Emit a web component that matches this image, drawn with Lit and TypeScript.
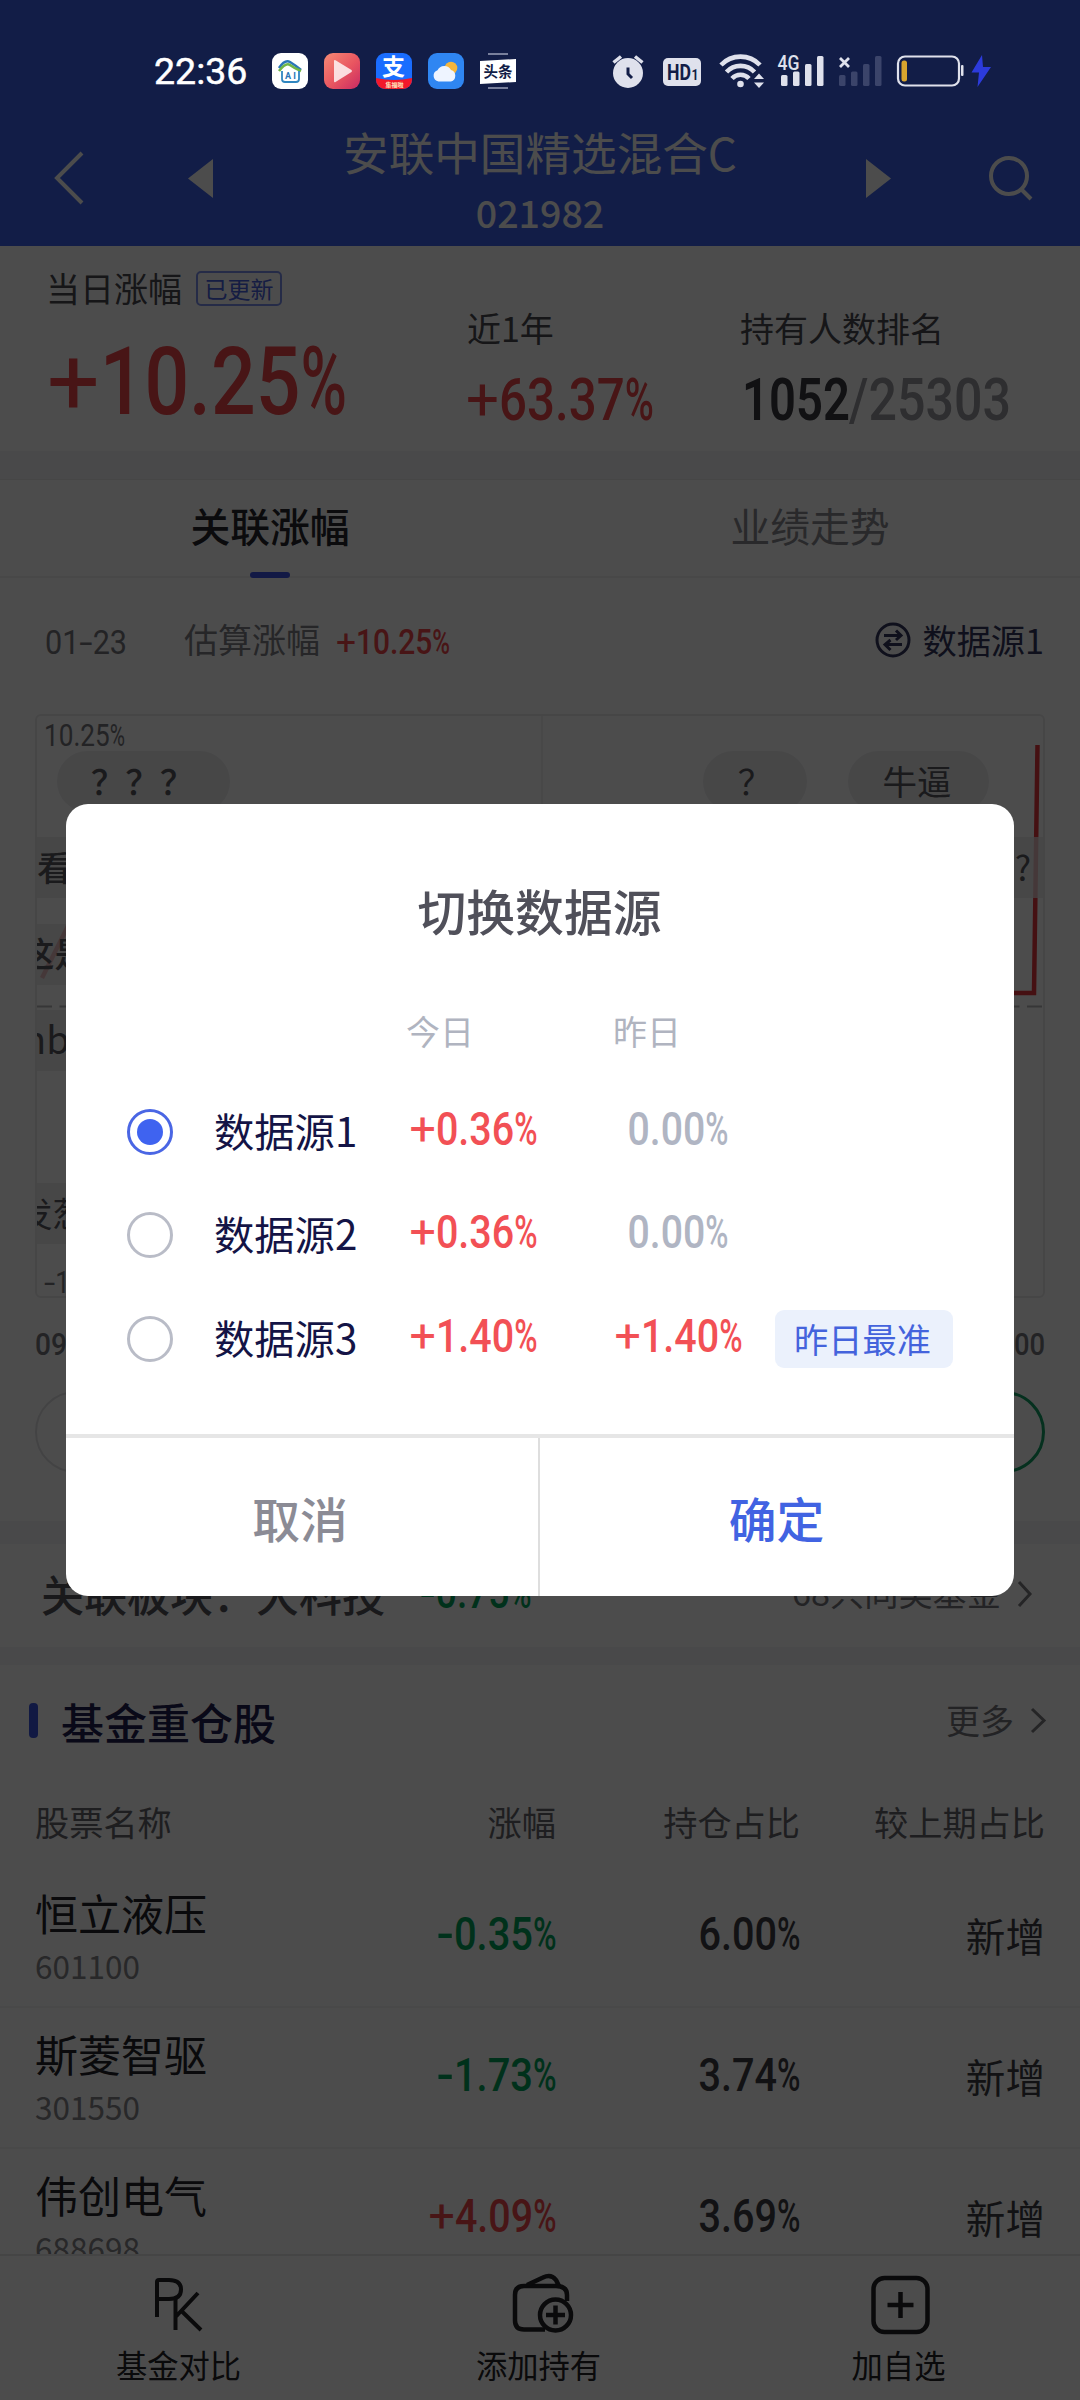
import { LitElement, html, svg, css } from "lit";
import { customElement, state } from "lit/decorators.js";

const unit = (c: string) =>
  c === "." || c === ":" ? 11 : c === "+" ? 26 : c === "-" ? 17 : c === "/" ? 15 : c === "%" ? 23 : 22;

const figure = (text: string, width: number, height: number, cls = "", weight = 500) => {
  const parts = text.match(/[0-9.]+|[^0-9.]/g) ?? [];
  const lengths = parts.map((p) => [...p].reduce((s, c) => s + unit(c), 0));
  const total = lengths.reduce((a, b) => a + b, 0);
  const pad = height * 0.045;
  const k = (width + pad * 2) / total;
  const size = height / 0.711;
  let x = -pad;
  return html`<svg class="fig ${cls}" width=${width} height=${height} font-size=${size} font-weight=${weight}>
    <text y=${height}>${parts.map((p, i) => {
      const start = x;
      x += lengths[i] * k;
      return svg`<tspan x=${start} textLength=${lengths[i] * k} lengthAdjust="spacingAndGlyphs" font-weight=${p === "+" ? 400 : weight}>${p}</tspan>`;
    })}</text>
  </svg>`;
};

const sources = [
  { name: "数据源1", today: "+0.36%", last: "0.00%", best: false },
  { name: "数据源2", today: "+0.36%", last: "0.00%", best: false },
  { name: "数据源3", today: "+1.40%", last: "+1.40%", best: true },
];

const stocks = [
  { name: "恒立液压", code: "601100", change: "-0.35%", w: 117, share: "6.00%", diff: "新增" },
  { name: "斯菱智驱", code: "301550", change: "-1.73%", w: 117, share: "3.74%", diff: "新增" },
  { name: "伟创电气", code: "688698", change: "+4.09%", w: 125, share: "3.69%", diff: "新增" },
];

const chevron = (w: number, h: number) => html`<svg width=${w} height=${h} fill="none" stroke="#7c7c80" stroke-width="3">
  <path d="M2 2 L${w - 3} ${h / 2} L2 ${h - 2}" /></svg>`;

@customElement("app-root")
export class AppRoot extends LitElement {
  @state() private selected = 0;

  static styles = css`
    :host {
      display: block;
      font-family: "Noto Sans CJK SC", "Noto Sans", sans-serif;
      color: #333;
    }
    * { box-sizing: border-box; }
    svg { display: block; flex: none; overflow: visible; }
    .page {
      position: relative;
      width: 1080px;
      height: 2400px;
      overflow: hidden;
      background: #fff;
      display: flex;
      flex-direction: column;
      white-space: nowrap;
    }
    .fig { font-family: Roboto, sans-serif; fill: currentColor; }
    .red { color: #f0484c; }
    .green { color: #00a35a; }
    .gray { color: #8f8f96; }
    .gap { background: #f6f6f8; flex: none; }
    .gap.a { height: 28px; }
    .gap.b { height: 23px; }
    .gap.c { height: 18px; }

    .header {
      flex: none;
      height: 246px;
      padding: 120px 48px 0 54px;
      background: #3c61ed;
      color: #fff;
      display: grid;
      grid-template-columns: 134px 706px 1fr;
      align-items: start;
    }
    .header .back { margin-top: 31px; }
    .title { display: flex; align-items: flex-start; }
    .title .names { width: 652px; text-align: center; }
    .title .tri { margin-top: 39px; }
    .fund { font-size: 45.6px; line-height: 61px; padding-top: 1px; }
    .code { font-size: 37.6px; line-height: 54px; font-weight: 500; padding-top: 3px; }
    .header .search { margin: 36px 0 0 90px; }

    .summary { flex: none; height: 205px; padding: 20px 0 0 48px; display: grid; grid-template-columns: 419px 273px 1fr; }
    .label { font-size: 34px; line-height: 44px; color: #4a4a50; }
    .day { display: flex; align-items: center; gap: 14px; height: 44px; margin-left: -2px; }
    .tag {
      width: 86px; height: 35px; border: 2px solid #7d92ee; border-radius: 5px;
      font-size: 23px; line-height: 30px; text-align: center; color: #4761e0;
    }
    .big { margin-top: 37px; margin-left: 2px; }
    .metric { padding-top: 40px; }
    .metric .fig { margin: 28px 0 0 1px; }
    .metric .rank { display: flex; gap: 2px; color: #3a3a42; padding-left: 3px; }
    .rank .gray { color: #9a9aa0; }

    .tabs { flex: none; height: 99px; border-top: 1px solid #ececec; border-bottom: 2px solid #f0f0f0; display: grid; grid-template-columns: 1fr 1fr; text-align: center; }
    .tab { font-size: 39.8px; line-height: 60px; padding-top: 15px; color: #8a8a90; display: flex; flex-direction: column; align-items: center; }
    .tab.on { color: #26262e; font-weight: 500; }
    .mark { width: 40px; height: 6px; border-radius: 3px; background: #3c55e8; margin-top: 17px; }

    .estimate { flex: none; height: 136px; padding: 39px 36px 0 46px; display: flex; align-items: flex-start; color: #77777c; }
    .estimate .label { color: #808086; margin-left: 58px; width: 153px; }
    .estimate .fig { margin-top: 14px; }
    .estimate .red { margin-top: 12px; }
    .switch { margin-left: auto; display: flex; gap: 11px; color: #34365e; }
    .switch svg { margin-top: 5px; }
    .switch span { font-size: 34.2px; line-height: 44px; }

    .chart { flex: none; position: relative; width: 1010px; height: 584px; margin-left: 35px; overflow: hidden; border: 2px solid #eaeaec; border-radius: 6px; }
    .chart > * { position: absolute; }
    .mid { left: 504px; top: 0; height: 580px; border-left: 2px solid #f0f0f2; }
    .line { left: 0; top: 0; }
    .pill { height: 61px; border-radius: 31px; background: rgba(236, 236, 238, 0.92); font-size: 34.5px; line-height: 58px; color: #58585e; text-align: center; overflow: hidden; font-weight: 500; }
    .band { border-radius: 0; background: rgba(232, 232, 234, 0.75); }
    .p1 { left: 20px; top: 35px; width: 173px; padding-right: 2px; }
    .p2 { left: 666px; top: 35px; width: 104px; font-weight: 400; }
    .p3 { left: 811px; top: 35px; width: 141px; padding-right: 3px; font-weight: 400; }
    .p4 { left: -2px; top: 121px; width: 400px; text-align: left; padding-left: 2px; }
    .p5 { left: 700px; top: 121px; width: 308px; text-align: right; padding-right: 14px; font-weight: 400; }
    .p6 { left: -20px; top: 208px; width: 400px; text-align: left; padding-left: 3px; line-height: 56px; }
    .p7 { left: -20px; top: 294px; width: 400px; text-align: left; padding-left: 6px; font-size: 38px; line-height: 55px; font-weight: 400; }
    .p8 { left: -20px; top: 467px; width: 400px; text-align: left; padding-left: 1px; font-weight: 400; }
    .high { left: 8px; top: 8px; color: #77777c; }
    .low { left: 8px; top: 555px; color: #77777c; }

    .hours { flex: none; height: 93px; padding: 35px 36px 0; display: flex; justify-content: space-between; color: #77777c; }
    .votes { flex: none; height: 130px; padding: 0 35px; display: grid; grid-template-columns: 1fr 1fr; gap: 20px; }
    .vote { height: 82px; border: 2px solid #e2e2e4; border-radius: 41px; }
    .vote.up { border: 3px solid #11a067; }

    .board { flex: none; height: 103px; padding: 18px 47px 0 41px; display: flex; align-items: flex-start; }
    .board .name { font-size: 43px; line-height: 62px; font-weight: 500; color: #55555a; width: 380px; }
    .board .fig { margin-top: 15px; }
    .board .peers { margin-left: auto; margin-right: 16px; font-size: 34.2px; line-height: 50px; padding-top: 4px; color: #77777c; }
    .board svg:last-child { margin-top: 18px; }

    .holdings { flex: none; height: 589px; overflow: hidden; }
    .head { height: 116px; padding: 28px 33px 0 29px; display: flex; align-items: flex-start; }
    .head .bar { width: 9px; height: 35px; border-radius: 4px; background: #3a55e0; margin-top: 10px; }
    .head h2 { margin: -2px auto 0 23px; font-size: 43px; line-height: 60px; font-weight: 500; color: #1f2150; }
    .head .more { font-size: 34px; line-height: 50px; margin-top: 2px; margin-right: 16px; color: #77777c; }
    .head svg { margin-top: 14px; }
    .row { display: grid; grid-template-columns: 1fr 220px 244px 245px; padding: 0 35px; text-align: right; }
    .row > :first-child { text-align: left; }
    .th { height: 86px; font-size: 34.2px; line-height: 80px; color: #66666c; }
    .td { height: 141px; border-bottom: 2px solid #f3f3f5; }
    .td .fig { margin: 50px 1px 0 auto; }
    .stock { font-size: 43px; line-height: 60px; color: #222228; padding-top: 15px; }
    .ticker { font-size: 31.5px; line-height: 40px; color: #85858b; padding-top: 3px; }
    .share { color: #3c3c44; }
    .diff { font-size: 39.6px; line-height: 60px; padding-top: 38px; color: #3c3c44; }

    .bottom { flex: none; height: 147px; border-top: 2px solid #e6e6e8; background: #fff; display: grid; grid-template-columns: repeat(3, 1fr); color: #222226; }
    .act { display: flex; flex-direction: column; align-items: center; font-size: 31.3px; line-height: 44px; padding: 16px 3px 0 0; }
    .act svg { margin-bottom: 7px; }

    .mask { position: absolute; inset: 0; background: rgba(0, 0, 0, 0.7); padding: 804px 66px 0; }
    .dialog { width: 948px; height: 792px; border-radius: 22px; background: #fff; display: flex; flex-direction: column; overflow: hidden; }
    .dialog h1 { margin: 0; padding: 71px 1px 0 0; height: 202px; font-size: 48.8px; line-height: 70px; font-weight: 500; text-align: center; color: #50505a; }
    .cols { height: 74px; display: grid; grid-template-columns: 340px 207px 1fr; font-size: 34px; line-height: 50px; color: #b0b4c0; }
    .cols :first-child { grid-column: 2; }
    .option { height: 103.5px; padding-left: 61px; display: flex; align-items: center; }
    .radio { width: 46px; height: 46px; border: 3px solid #b9bcc7; border-radius: 50%; display: grid; place-items: center; }
    .radio.on { border-color: #4a66e4; }
    .dot { width: 26px; height: 26px; border-radius: 50%; background: #3f63f0; }
    .option .name { margin-left: 41px; width: 197px; font-size: 40.3px; line-height: 60px; margin-top: -4px; color: #141446; }
    .option .fig { margin-top: -7px; }
    .last { width: 159px; margin-left: 80px; }
    .option .flat { margin-left: 13px; color: #b0b5c3; }
    .option .red { color: #f25055; }
    .best { width: 178px; height: 58px; border-radius: 9px; background: #ebf1fc; color: #4463dc; font-size: 34.2px; line-height: 56px; padding-right: 3px; text-align: center; }
    .actions { margin-top: auto; height: 162px; border-top: 4px solid #e6e6e6; display: grid; grid-template-columns: 474px 1fr; }
    .btn { font-size: 47.8px; line-height: 70px; padding: 45px 4px 0 0; text-align: center; font-weight: 500; }
    .cancel { color: #8b8b95; border-right: 2px solid #dedede; }
    .ok { color: #4163e2; padding-right: 1px; }

    .status { position: absolute; left: 0; top: 0; width: 1080px; height: 110px; padding: 53px 0 0 154px; display: flex; align-items: flex-start; }
    .clock { font-family: Roboto, sans-serif; font-size: 37.5px; line-height: 36px; color: #fff; width: 118px; -webkit-text-stroke: 0.5px #fff; }
    .apps { display: flex; gap: 16px; width: 340px; }
    .sys { display: block; }
    .st { font-family: "Noto Sans CJK SC", sans-serif; font-weight: 700; }
    .rb { font-family: Roboto, sans-serif; font-weight: 700; }
    .rm { font-family: Roboto, sans-serif; font-weight: 500; }
  `;

  private statusBar() {
    return html`<div class="status">
      <div class="clock">22:36</div>
      <div class="apps">
        <svg width="36" height="36" viewBox="0 0 36 36">
          <rect width="36" height="36" rx="9" fill="#fff" />
          <path d="M7 15 Q13 6 18 9 T29 17" fill="none" stroke="#2a76b8" stroke-width="2.600" />
          <path d="M7 18 Q14 9 18 12 T29 18" fill="none" stroke="#6fb548" stroke-width="2.600" />
          <path d="M10 18 V26 Q10 29 13 29 H24 Q27 29 27 26 V18" fill="none" stroke="#2f86c0" stroke-width="1.800" />
          <text x="13" y="26" class="rb" font-size="9" textLength="11" fill="#2a76b8">AI</text>
        </svg>
        <svg width="36" height="36" viewBox="0 0 36 36">
          <defs><linearGradient id="pg" x1="0" y1="0" x2="1" y2="1"><stop offset="0" stop-color="#f58a75" /><stop offset=".55" stop-color="#e95560" /><stop offset="1" stop-color="#c82a63" /></linearGradient></defs>
          <rect width="36" height="36" rx="9" fill="url(#pg)" />
          <path d="M10 8 Q10 6.500 11.500 7.300 L27.500 17 Q28.500 18 27.500 19 L11.500 29 Q10 29.800 10 28 Z" fill="#fff" fill-opacity=".8" />
        </svg>
        <svg width="36" height="36" viewBox="0 0 36 36">
          <defs><clipPath id="ac"><rect width="36" height="36" rx="9" /></clipPath></defs>
          <g clip-path="url(#ac)">
            <rect width="36" height="36" fill="#1a6dff" />
            <path d="M0 25 Q18 29 36 25 V36 H0 Z" fill="#f2182a" />
          </g>
          <text x="6" y="22" class="st" font-size="23" fill="#fff">支</text>
          <text x="9.500" y="33.500" class="st" font-size="6" fill="#ffe9c0">集福啦</text>
        </svg>
        <svg width="36" height="36" viewBox="0 0 36 36">
          <rect width="36" height="36" rx="9" fill="#2f86f2" />
          <circle cx="23" cy="15" r="6.300" fill="#f4b63c" />
          <path d="M10.500 28.500 A5.800 5.800 0 0 1 9.500 17.300 A7.500 7.500 0 0 1 23 17 A6 6 0 0 1 23 28.500 Z" fill="#eef4ff" />
        </svg>
        <svg width="36" height="36" viewBox="0 0 36 36">
          <path d="M8 1 H28 M8 35 H28" stroke="#dfe3f2" stroke-width="1" />
          <path d="M0 8 L36 6 V29 L0 31 Z" fill="#fff" />
          <text x="3.500" y="24" class="st" font-size="15" textLength="29" lengthAdjust="spacingAndGlyphs" fill="#121d47">头条</text>
        </svg>
      </div>
      <svg class="sys" width="385" height="36" viewBox="0 0 385 36" fill="#dfe1ec">
        <circle cx="16" cy="20" r="15" />
        <path d="M16 14.500 V21 L20 25" fill="none" stroke="#121d47" stroke-width="3" />
        <path d="M1.500 9.500 L9 3.500 M30.500 9.500 L23 3.500" stroke="#dfe1ec" stroke-width="3.500" />
        <rect x="51" y="5" width="38" height="28" rx="5" />
        <text x="55" y="27" class="rb" font-size="22" textLength="24" lengthAdjust="spacingAndGlyphs" fill="#121d47">HD</text>
        <text x="79.500" y="27" class="rb" font-size="14" textLength="7" lengthAdjust="spacingAndGlyphs" fill="#121d47">1</text>
        <g fill="none" stroke="#dfe1ec" stroke-width="4.600">
          <path d="M109 12 A27 27 0 0 1 148 12" />
          <path d="M114.500 19 A19 19 0 0 1 142.500 19" />
          <path d="M120 25.500 A11.500 11.500 0 0 1 137 25.500" />
        </g>
        <circle cx="128.500" cy="31" r="3.300" />
        <path d="M142 26 L147 20.500 L152 26 Z M142 29.500 H152 L147 35 Z" />
        <text x="165.500" y="16.500" class="rm" font-size="21" textLength="22" lengthAdjust="spacingAndGlyphs">4G</text>
        <rect x="169" y="22" width="6.500" height="11" rx="1.500" />
        <rect x="181" y="18.500" width="6.500" height="14.500" rx="1.500" />
        <rect x="193" y="11" width="6.500" height="22" rx="1.500" />
        <rect x="205" y="3" width="6.500" height="30" rx="1.500" />
        <path d="M228 5 L237 14 M237 5 L228 14" stroke="#dfe1ec" stroke-width="2.800" />
        <g fill="#3b446a">
          <rect x="227" y="22" width="6.500" height="11" rx="1.500" />
          <rect x="239" y="18.500" width="6.500" height="14.500" rx="1.500" />
          <rect x="251" y="11" width="6.500" height="22" rx="1.500" />
          <rect x="263" y="3" width="6.500" height="30" rx="1.500" />
        </g>
        <rect x="286" y="3.500" width="61" height="29" rx="7" fill="none" stroke="#dfe1ec" stroke-width="2.200" />
        <rect x="349" y="12" width="2.500" height="11" rx="1" />
        <rect x="289.500" y="7.500" width="5.500" height="21" rx="2.500" fill="#d9a52e" />
        <path d="M370 2 L359.500 19.500 H367 L365.500 34 L379 14 H371 Z" fill="#2c3bdc" />
      </svg>
    </div>`;
  }

  render() {
    return html`<div class="page">
      <div class="header">
        <svg class="back" width="32" height="54" fill="none" stroke="#fff" stroke-width="4"><path d="M28 2 L3 27 L28 52" /></svg>
        <div class="title">
          <svg class="tri" width="26" height="40" fill="#fff"><path d="M25 0 V39 L0 19.500 Z" /></svg>
          <div class="names">
            <div class="fund">安联中国精选混合C</div>
            <div class="code">021982</div>
          </div>
          <svg class="tri" width="26" height="40" fill="#fff"><path d="M0 0 V39 L25 19.500 Z" /></svg>
        </div>
        <svg class="search" width="46" height="46" fill="none" stroke="#fff" stroke-width="4"><circle cx="25" cy="20" r="18" /><path d="M37 33 L47 43" /></svg>
      </div>

      <div class="summary">
        <div>
          <div class="day"><span class="label">当日涨幅</span><span class="tag">已更新</span></div>
          ${figure("+10.25%", 294, 67, "red big")}
        </div>
        <div class="metric"><div class="label">近1年</div>${figure("+63.37%", 184, 42, "red")}</div>
        <div class="metric">
          <div class="label">持有人数排名</div>
          <div class="rank">${figure("1052", 104, 42, "", 600)}${figure("/25303", 158, 42, "gray")}</div>
        </div>
      </div>
      <div class="gap a"></div>
      <div class="tabs">
        <div class="tab on">关联涨幅<div class="mark"></div></div>
        <div class="tab">业绩走势</div>
      </div>
      <div class="estimate">
        ${figure("01-23", 80, 23, "", 400)}
        <span class="label">估算涨幅</span>
        ${figure("+10.25%", 112, 25, "red")}
        <div class="switch">
          <svg width="36" height="36" fill="none" stroke="currentColor" stroke-width="3">
            <circle cx="18" cy="18" r="16" />
            <path d="M9 13.500 H26 M21 8.500 L26 13.500 L21 18 M27 22.500 H10 M15.500 28 L10 22.500 L15.500 18" />
          </svg>
          <span>数据源1</span>
        </div>
      </div>

      <div class="chart">
        <div class="mid"></div>
        <svg class="line" width="1006" height="580" fill="none" stroke="#e6383e" stroke-width="4.500">
          <path d="M0 290.500 H1006" stroke="#b4b4b8" stroke-width="2" stroke-dasharray="15 7.500" />
          <path d="M1000.500 29 L997 277 H900" /><path d="M5 262 L32 208" />
        </svg>
        <div class="high">${figure("10.25%", 79, 22, "", 400)}</div>
        <div class="low">${figure("-10.25%", 90, 22, "", 400)}</div>
        <div class="pill p1">？？？</div>
        <div class="pill p2">？</div>
        <div class="pill p3">牛逼</div>
        <div class="pill band p4">看</div>
        <div class="pill band p5">?</div>
        <div class="pill band p6">这是</div>
        <div class="pill band p7">nb</div>
        <div class="pill band p8">发葱</div>
      </div>
      <div class="hours">${figure("09:30", 70, 22)}${figure("15:00", 68, 22)}</div>
      <div class="votes"><div class="vote"></div><div class="vote up"></div></div>
      <div class="gap b"></div>
      <div class="board">
        <span class="name">关联板块：大科技</span>
        ${figure("-0.75%", 109, 31, "green")}
        <span class="peers">68只同类基金</span>
        ${chevron(16, 28)}
      </div>
      <div class="gap c"></div>

      <div class="holdings">
        <div class="head"><div class="bar"></div><h2>基金重仓股</h2><span class="more">更多</span>${chevron(17, 27)}</div>
        <div class="row th"><span>股票名称</span><span>涨幅</span><span>持仓占比</span><span>较上期占比</span></div>
        ${stocks.map(
          (s) => html`<div class="row td">
            <div><div class="stock">${s.name}</div><div class="ticker">${s.code}</div></div>
            ${figure(s.change, s.w, 33, s.change[0] === "-" ? "green" : "red")}
            ${figure(s.share, 99, 33, "share")}
            <div class="diff">${s.diff}</div>
          </div>`
        )}
      </div>

      <div class="bottom">
        <div class="act">
          <svg width="60" height="64" fill="none" stroke="currentColor" stroke-width="4">
            <path d="M8 45 V10 Q8 8 10 8 H20 Q32 8 32 17.500 Q32 27 20 27 H8" />
            <path d="M26.500 27 V58 M49 21 L26.500 45 M31.500 38 L52 58" />
          </svg>
          基金对比
        </div>
        <div class="act">
          <svg width="60" height="64" fill="none" stroke="currentColor" stroke-width="4.500">
            <path d="M36 57.500 H15 Q6 57.500 6 48.500 V23 Q6 14 15 14 H47 Q58 14 58 23 V29" />
            <path d="M18 13 L34 5.500 Q42 1.500 47 8 L50 14" />
            <circle cx="46.500" cy="43" r="15.500" /><path d="M37 43 H56 M46.500 33.500 V52.500" />
          </svg>
          添加持有
        </div>
        <div class="act">
          <svg width="60" height="64" fill="none" stroke="currentColor" stroke-width="4.500">
            <rect x="4.500" y="6" width="54" height="54" rx="11" /><path d="M18.500 33 H44.500 M31.500 20 V46" />
          </svg>
          加自选
        </div>
      </div>

      <div class="mask">
        <div class="dialog">
          <h1>切换数据源</h1>
          <div class="cols"><span>今日</span><span>昨日</span></div>
          ${sources.map(
            (s, i) => html`<div class="option" @click=${() => (this.selected = i)}>
              <div class="radio ${i === this.selected ? "on" : ""}">${i === this.selected ? html`<div class="dot"></div>` : ""}</div>
              <span class="name">${s.name}</span>
              ${figure(s.today, 125, 33, "red")}
              <div class="last">${s.last[0] === "+" ? figure(s.last, 125, 33, "red") : figure(s.last, 98, 33, "flat")}</div>
              ${s.best ? html`<div class="best">昨日最准</div>` : ""}
            </div>`
          )}
          <div class="actions"><div class="btn cancel">取消</div><div class="btn ok">确定</div></div>
        </div>
      </div>
      ${this.statusBar()}
    </div>`;
  }
}
